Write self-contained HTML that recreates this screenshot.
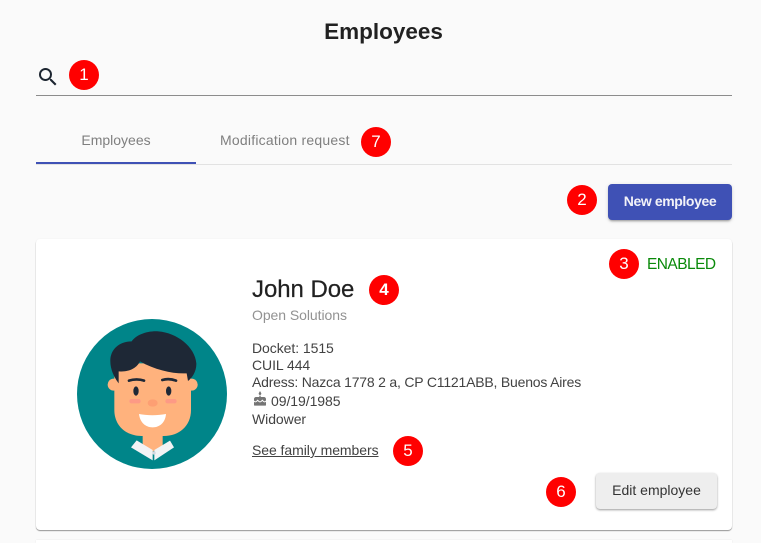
<!DOCTYPE html>
<html><head><meta charset="utf-8"><style>
html,body{margin:0;padding:0;width:761px;height:543px;overflow:hidden}
body{background:#fafafa;font-family:"Liberation Sans",sans-serif;color:#3c3c3c}
#w{position:relative;width:761px;height:543px;overflow:hidden;background:#fafafa}
.a{position:absolute;white-space:nowrap}
.b{position:absolute;width:30px;height:30px;border-radius:50%;background:#f00;color:#fff;font-size:17px;line-height:30px;text-align:center}
.l{position:absolute;left:252px;font-size:14px;line-height:17px;color:#424242;white-space:nowrap;letter-spacing:-.06px}
</style></head><body><div id="w">
<div class="a" style="left:0;width:767px;top:18px;text-align:center;font-size:22.5px;line-height:28px;font-weight:700;color:#212121">Employees</div>
<svg class="a" style="left:36px;top:65px" width="24" height="24" viewBox="0 0 24 24"><path fill="#1c2530" d="M15.5 14h-.79l-.28-.27A6.47 6.47 0 0 0 16 9.5 6.5 6.5 0 1 0 9.5 16c1.61 0 3.09-.59 4.23-1.57l.27.28v.79l5 4.99L20.49 19l-4.99-5zm-6 0C7.01 14 5 11.99 5 9.5S7.01 5 9.5 5 14 7.01 14 9.5 11.99 14 9.5 14z"/></svg>
<div class="b" style="left:69px;top:60px">1</div>
<div class="a" style="left:36px;top:95px;width:696px;height:1px;background:#8c8c8c"></div>
<div class="a" style="left:36px;top:164px;width:696px;height:1px;background:#e2e2e2"></div>
<div class="a" style="left:36px;top:162px;width:160px;height:2px;background:#3f51b5"></div>
<div class="a" style="left:36px;width:160px;top:131px;text-align:center;font-size:14px;line-height:18px;color:#7f7f7f">Employees</div>
<div class="a" style="left:220px;top:131px;font-size:14px;line-height:18px;color:#7f7f7f;letter-spacing:.22px">Modification request</div>
<div class="b" style="left:361px;top:127px">7</div>
<div class="b" style="left:567px;top:185px">2</div>
<div class="a" style="left:608px;top:184px;width:124px;height:36px;border-radius:4px;background:#3f51b5;color:#f2f2f8;font-size:14px;font-weight:700;line-height:35px;text-align:center;letter-spacing:-.4px;box-shadow:0 2px 2px -1px rgba(0,0,0,.35),0 1px 4px rgba(0,0,0,.12)">New employee</div>
<div class="a" style="left:36px;top:239px;width:696px;height:291px;background:#fff;border-radius:4px;box-shadow:0 1px 1px rgba(0,0,0,.4),0 0 2px rgba(0,0,0,.04)"></div>
<div class="a" style="left:36px;top:540px;width:696px;height:3px;background:#fff;box-shadow:0 0 1px rgba(0,0,0,.15)"></div>
<div class="b" style="left:609px;top:249px">3</div>
<div class="a" style="left:647px;top:255px;font-size:15.5px;line-height:19px;color:#0a8a0a;letter-spacing:-.55px">ENABLED</div>
<div class="a" style="left:252px;top:276px;font-size:24px;line-height:28px;color:#212121;letter-spacing:-.05px;font-weight:400;-webkit-text-stroke:.2px #212121">John Doe</div>
<div class="b" style="left:369px;top:275px;font-weight:700">4</div>
<div class="a" style="left:252px;top:307px;font-size:14px;line-height:17px;color:#929292;letter-spacing:-.06px">Open Solutions</div>
<div class="l" style="top:340px">Docket: 1515</div>
<div class="l" style="top:357px">CUIL 444</div>
<div class="l" style="top:374px;letter-spacing:-.2px">Adress: Nazca 1778 2 a, CP C1121ABB, Buenos Aires</div>
<svg class="a" style="left:252px;top:391px" width="16" height="16" viewBox="0 0 24 24"><path fill="#757575" d="M12 6c1.11 0 2-.9 2-2 0-.38-.1-.73-.29-1.03L12 0l-1.71 2.97c-.19.3-.29.65-.29 1.03 0 1.1.9 2 2 2zm4.6 9.99l-1.07-1.07-1.08 1.07c-1.3 1.3-3.58 1.31-4.89 0l-1.07-1.07-1.09 1.07C6.75 16.64 5.88 17 4.96 17c-.73 0-1.4-.23-1.96-.61V21c0 .55.45 1 1 1h16c.55 0 1-.45 1-1v-4.61c-.56.38-1.23.61-1.96.61-.92 0-1.79-.36-2.44-1.01zM18 9h-5V7h-2v2H6c-1.66 0-3 1.34-3 3v1.54c0 1.08.88 1.96 1.96 1.96.52 0 1.02-.2 1.38-.57l2.14-2.13 2.13 2.13c.74.74 2.03.74 2.77 0l2.14-2.13 2.13 2.13c.37.37.86.57 1.38.57 1.08 0 1.96-.88 1.96-1.96V12C21 10.34 19.66 9 18 9z"/></svg>
<div class="l" style="top:393px;left:271px">09/19/1985</div>
<div class="l" style="top:411px">Widower</div>
<div class="l" style="top:442px;text-decoration:underline">See family members</div>
<div class="b" style="left:393px;top:436px">5</div>
<div class="b" style="left:546px;top:477px">6</div>
<div class="a" style="left:596px;top:473px;width:121px;height:36px;border-radius:4px;background:#eee;color:#333;font-size:14px;line-height:35px;text-align:center;box-shadow:0 1px 2px rgba(0,0,0,.4)">Edit employee</div>
<svg class="a" style="left:60px;top:310px" width="180" height="170" viewBox="0 0 540 510">
<circle cx="276" cy="252" r="225" fill="#008589"/>
<clipPath id="c"><circle cx="276" cy="252" r="225"/></clipPath>
<g clip-path="url(#c)">
<path d="M248 360h60v50l-30 15-30-15z" fill="#ffb27d"/>
<path d="M230 391l48 29v31L213 412z" fill="#f2f3f5"/>
<path d="M330 392l-47 28v31l59-39z" fill="#f2f3f5"/>
<circle cx="282" cy="429" r="5" fill="#d3d6e0"/>
<circle cx="161" cy="224" r="18" fill="#ffb27d"/>
<circle cx="395" cy="224" r="18" fill="#ffb27d"/>
<path d="M163 160h230v140c0 48-36 78-82 78h-66c-46 0-82-30-82-78z" fill="#ffb27d"/>
<path d="M176 220C165 205 150 180 151 150C152 120 175 95 215 94C228 75 260 62 295 64C350 68 405 110 409 160C410 185 395 205 384 213L380 190C340 192 285 180 240 154C230 175 205 187 176 184Z" fill="#1e2836"/>
<path d="M207 212c14-5 32-5 45 0" stroke="#1e2836" stroke-width="8" stroke-linecap="round" fill="none"/>
<path d="M307 210c13-4 28-3 41 2" stroke="#1e2836" stroke-width="8" stroke-linecap="round" fill="none"/>
<ellipse cx="228" cy="243" rx="8" ry="14" fill="#1e2836"/>
<ellipse cx="326" cy="243" rx="8" ry="14" fill="#1e2836"/>
<rect x="208" y="267" width="34" height="13" rx="6.5" fill="#fd9a85"/>
<rect x="316" y="267" width="34" height="13" rx="6.5" fill="#fd9a85"/>
<ellipse cx="278" cy="279" rx="15" ry="11" fill="#fd9f73"/>
<path d="M237 312c25 5 55 5 81 0-2 25-18 40-40 40s-38-15-41-40z" fill="#fff"/>
</g></svg>
</div></body></html>
